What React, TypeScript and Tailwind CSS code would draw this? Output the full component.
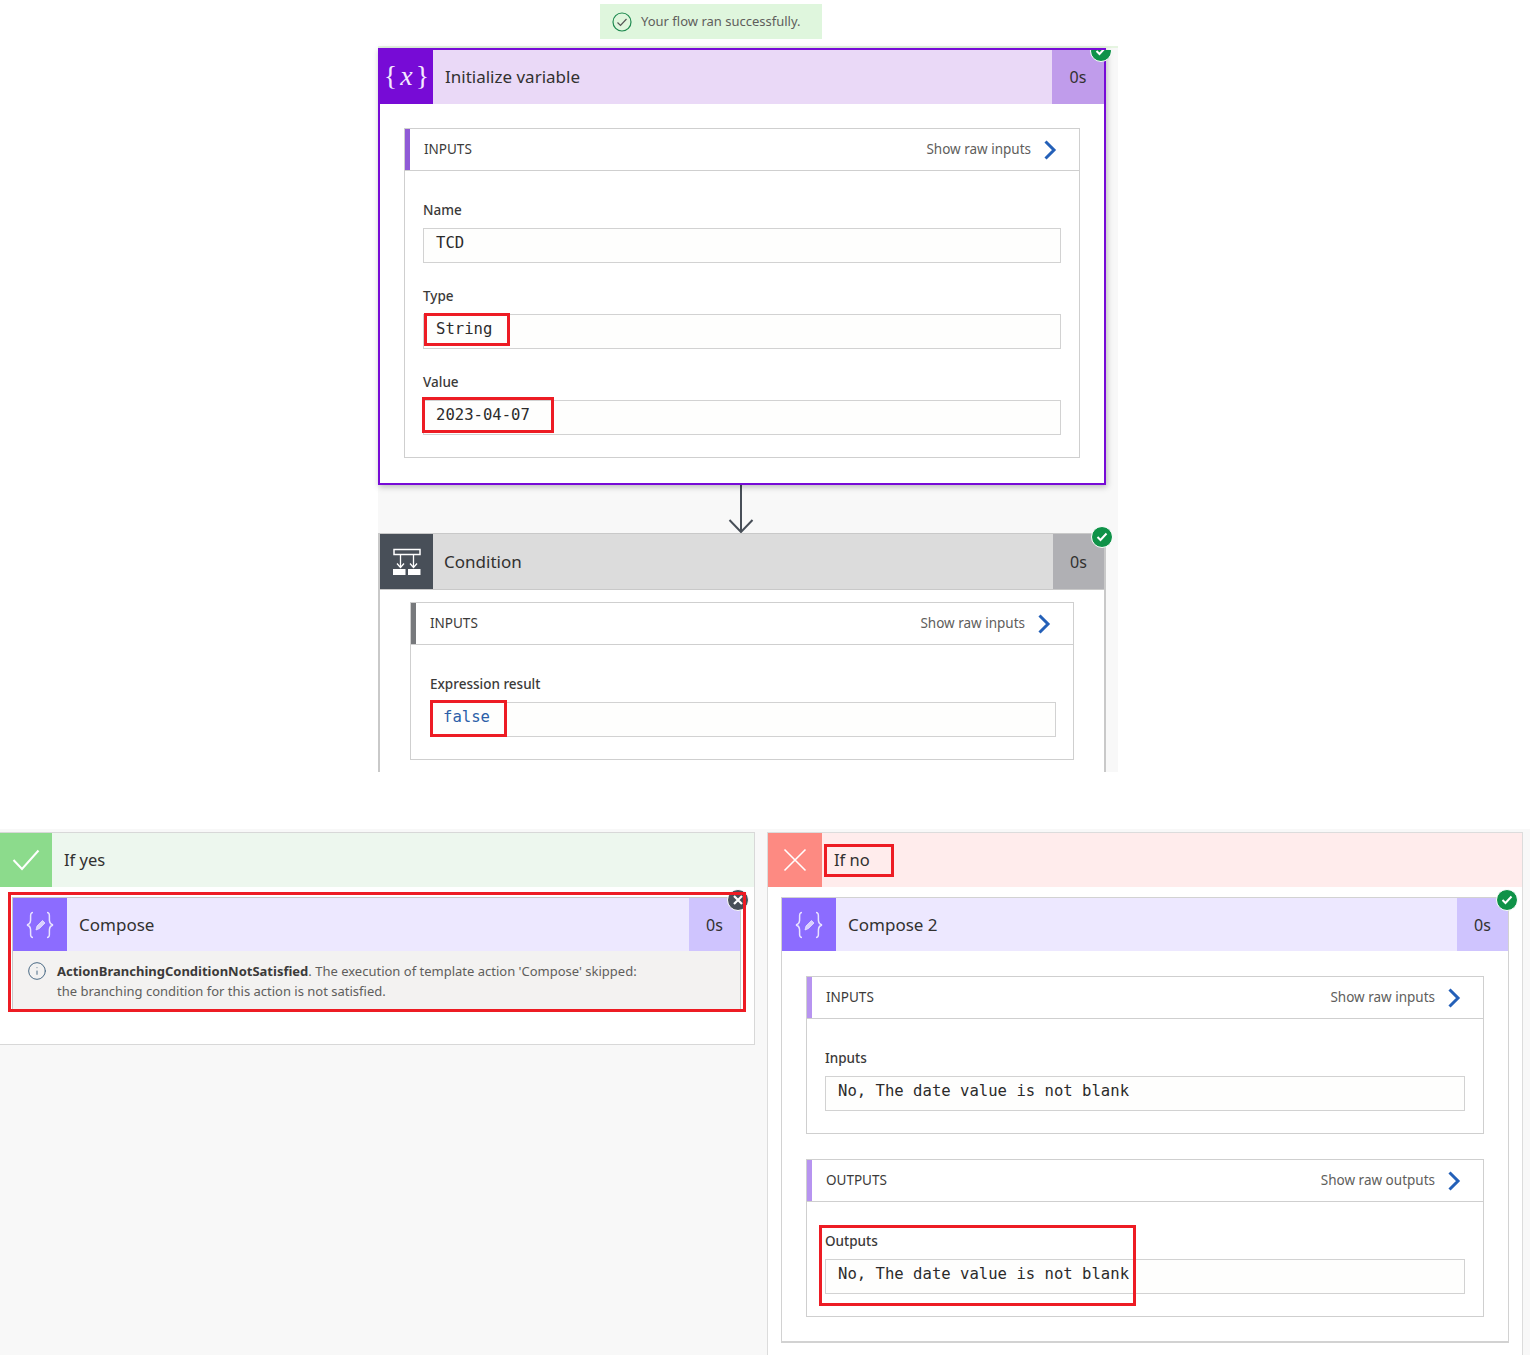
import React from 'react';
import { Info } from 'lucide-react';

const UI_FONT = "font-['Noto_Sans',sans-serif]";
const MONO_FONT = "font-['DejaVu_Sans_Mono',monospace]";

const RedBox: React.FC<{ className: string }> = ({ className }) => (
  <div className={`absolute border-[3px] border-[#ed1c24] pointer-events-none ${className}`} />
);

const Chevron = () => (
  <svg width="14" height="20" viewBox="0 0 14 20" fill="none">
    <path d="M2.5 1.5 L11 10 L2.5 18.5" stroke="#2460b8" strokeWidth="3" />
  </svg>
);

const CheckBadge = () => (
  <div className="w-[22px] h-[22px] rounded-full bg-[#0f9248] border border-white flex items-center justify-center">
    <svg width="12" height="10" viewBox="0 0 12 10" fill="none">
      <path d="M1.5 5 L4.5 8 L10.5 1.5" stroke="white" strokeWidth="2" />
    </svg>
  </div>
);

const CrossBadge = () => (
  <div className="w-[22px] h-[22px] rounded-full bg-[#484f58] border border-white flex items-center justify-center">
    <svg width="10" height="10" viewBox="0 0 10 10" fill="none">
      <path d="M1 1 L9 9 M9 1 L1 9" stroke="white" strokeWidth="2.2" />
    </svg>
  </div>
);

const ComposeIcon = () => (
  <svg width="30" height="30" viewBox="0 0 30 30" fill="none">
    <path d="M8 2.5 C4.5 2.5 6 7 5.5 11 C5.2 13.5 4 14.5 2 15 C4 15.5 5.2 16.5 5.5 19 C6 23 4.5 27.5 8 27.5" stroke="#e9e3ff" strokeWidth="1.5" />
    <path d="M22 2.5 C25.5 2.5 24 7 24.5 11 C24.8 13.5 26 14.5 28 15 C26 15.5 24.8 16.5 24.5 19 C24 23 25.5 27.5 22 27.5" stroke="#e9e3ff" strokeWidth="1.5" />
    <path d="M11 20 L12 16 L17.5 10.5 L20 13 L14.5 18.5 Z" fill="#d9cfff" stroke="#e9e3ff" strokeWidth="0.8" />
  </svg>
);

const ConditionIcon = () => (
  <svg width="30" height="28" viewBox="0 0 30 28" fill="none">
    <rect x="2" y="1.5" width="26" height="5" stroke="white" strokeWidth="1.5" />
    <path d="M8.5 7 V19 M21.5 7 V19" stroke="white" strokeWidth="1.3" />
    <path d="M5 15.5 L8.5 19.5 L12 15.5 M18 15.5 L21.5 19.5 L25 15.5" stroke="white" strokeWidth="1.3" />
    <rect x="1" y="21" width="12.5" height="6" fill="white" />
    <rect x="16" y="21" width="12.5" height="6" fill="white" />
  </svg>
);

const Field: React.FC<{
  label: string;
  value: string;
  valueClass?: string;
  className?: string;
  mark?: string;
}> = ({ label, value, valueClass = 'text-[#2b2b2b]', className = '', mark }) => (
  <div className={className}>
    <div className="h-[20px] leading-[20px] text-[13.5px] font-medium text-[#3b3a39]">{label}</div>
    <div className="relative h-[35px] border border-[#d2d2d2] bg-[#fefefd] pl-[12px] pt-[1px] mt-[8px]">
      <span className={`${MONO_FONT} text-[15.6px] leading-[20px] whitespace-pre ${valueClass}`}>{value}</span>
      {mark && <RedBox className={mark} />}
    </div>
  </div>
);

const Section: React.FC<{
  title: string;
  raw: string;
  bar: string;
  className: string;
  children: React.ReactNode;
}> = ({ title, raw, bar, className, children }) => (
  <div className={`border border-[#cfcfcf] bg-white ${className}`}>
    <div className="h-[42px] flex items-center border-b border-[#cfcfcf]">
      <div className={`w-[5px] self-stretch ${bar}`} />
      <span className="ml-[14px] text-[13.5px] text-[#3b3a39]">{title}</span>
      <span className="ml-auto text-[13.5px] text-[#605e5c]">{raw}</span>
      <span className="ml-[12px] mr-[22px] flex"><Chevron /></span>
    </div>
    {children}
  </div>
);

const ComposeHeader: React.FC<{ title: string }> = ({ title }) => (
  <div className="h-[53px] flex bg-[#ede8ff]">
    <div className="w-[54px] bg-[#8c6cff] flex items-center justify-center"><ComposeIcon /></div>
    <span className="ml-[12px] self-center text-[17px] text-[#323130]">{title}</span>
    <div className="ml-auto w-[51px] bg-[#cfc4fe] flex items-center justify-center text-[16px] text-[#323130]">0s</div>
  </div>
);

export default function App() {
  return (
    <div className={`w-[1536px] h-[1363px] bg-white overflow-hidden ${UI_FONT}`}>
      {/* Run banner */}
      <div className="ml-[600px] mt-[4px] w-[222px] h-[35px] bg-[#dff6dd] flex items-center pl-[12px]">
        <svg width="20" height="20" viewBox="0 0 20 20" fill="none">
          <circle cx="10" cy="10" r="9" stroke="#1f8a50" strokeWidth="1.2" />
          <path d="M5.5 10.5 L8.5 13.5 L14.5 7" stroke="#555" strokeWidth="1.2" />
        </svg>
        <span className="ml-[9px] text-[13px] text-[#605e5c] whitespace-nowrap">Your flow ran successfully.</span>
      </div>

      {/* Top flow */}
      <div className="ml-[378px] mt-[7px] w-[740px] h-[726px] bg-[#f8f8f8] border-t-2 border-[#e6f5e1] flex flex-col">
        <div className="relative w-[728px] h-[437px] shrink-0 border-2 border-[#770bd6] bg-white shadow-[1px_2px_6px_rgba(0,0,0,0.25)]">
          <div className="h-[54px] flex bg-[#ead9f7]">
            <div className="w-[53px] bg-[#770bd6] flex items-center justify-center text-[#f4e9ff] font-['Liberation_Serif',serif] text-[28px] leading-none pb-[3px]">
              <span>{'{'}</span><span className="italic mx-[3px]">x</span><span>{'}'}</span>
            </div>
            <span className="ml-[12px] self-center text-[17px] text-[#323130]">Initialize variable</span>
            <div className="ml-auto w-[52px] bg-[#c09ceb] flex items-center justify-center text-[16px] text-[#323130]">0s</div>
          </div>
          <div className="absolute top-0 -right-[8px] w-[22px] h-[12px] overflow-hidden">
            <div className="-mt-[10px]"><CheckBadge /></div>
          </div>
          <Section title="INPUTS" raw="Show raw inputs" bar="bg-[#8f5ad6]" className="mt-[24px] ml-[24px] w-[676px]">
            <div className="pt-[29px] pb-[22px] px-[18px]">
              <Field label="Name" value="TCD" />
              <Field label="Type" value="String" className="mt-[23px]" mark="left-0 -top-[2px] w-[86px] h-[33px]" />
              <Field label="Value" value="2023-04-07" className="mt-[23px]" mark="-left-[2px] -top-[4px] w-[132px] h-[36px]" />
            </div>
          </Section>
        </div>

        <div className="h-[48px] shrink-0 ml-[350px]">
          <svg width="26" height="48" viewBox="0 0 26 48" fill="none">
            <path d="M13 0 V47 M1.5 35 L13 47 L24.5 35" stroke="#484f58" strokeWidth="2" />
          </svg>
        </div>

        <div className="relative w-[728px] flex-1 border-x-2 border-t border-[#c9c9c9] bg-white">
          <div className="h-[56px] flex bg-[#dcdcdc] border-b border-[#c9c9c9]">
            <div className="w-[53px] bg-[#484f58] flex items-center justify-center"><ConditionIcon /></div>
            <span className="ml-[11px] self-center text-[17px] text-[#323130]">Condition</span>
            <div className="ml-auto w-[51px] bg-[#b0b0b4] flex items-center justify-center text-[16px] text-[#323130]">0s</div>
          </div>
          <div className="absolute -top-[8px] -right-[9px]"><CheckBadge /></div>
          <Section title="INPUTS" raw="Show raw inputs" bar="bg-[#77797c]" className="mt-[12px] ml-[30px] w-[664px]">
            <div className="pt-[29px] pb-[22px] pl-[19px] pr-[17px]">
              <Field label="Expression result" value="false" valueClass="text-[#2b5fa8]" mark="-left-px -top-[3px] w-[77px] h-[37px]" />
            </div>
          </Section>
        </div>
      </div>

      {/* Branches */}
      <div className="mt-[57px] w-[1530px] h-[526px] pt-[3px] bg-[#f8f8f8] flex items-start">
        <div className="relative w-[755px] h-[213px] bg-white border-t border-r border-b border-[#d8d8d8]">
          <div className="h-[54px] flex bg-[#edf7ee]">
            <div className="w-[52px] bg-[#8cdb8c] flex items-center justify-center">
              <svg width="28" height="22" viewBox="0 0 28 22" fill="none">
                <path d="M1.5 11 L10 20 L26.5 1.5" stroke="white" strokeWidth="2" />
              </svg>
            </div>
            <span className="ml-[12px] self-center text-[16.5px] text-[#323130]">If yes</span>
          </div>
          <div className="relative mt-[10px] ml-[12px] w-[729px] border border-[#c8c8c8] border-b-[#d8d8d8]">
            <ComposeHeader title="Compose" />
            <div className="h-[58px] bg-[#f3f2f1] flex pt-[10px] pl-[14px]">
              <Info className="w-[20px] h-[20px] text-[#4a6a85] shrink-0" strokeWidth={1.2} />
              <p className="ml-[10px] text-[13px] leading-[20px] text-[#605e5c]">
                <span className="font-bold text-[#3b3a39]">ActionBranchingConditionNotSatisfied</span>. The execution of template action 'Compose' skipped:<br />
                the branching condition for this action is not satisfied.
              </p>
            </div>
            <div className="absolute -top-[9px] -right-[9px]"><CrossBadge /></div>
          </div>
          <RedBox className="left-[8px] top-[59px] w-[738px] h-[120px]" />
        </div>

        <div className="ml-[12px] w-[756px] h-[523px] bg-white border-t border-x border-[#dcdcdc]">
          <div className="relative h-[54px] flex bg-[#ffecec]">
            <div className="w-[54px] bg-[#fd8a82] flex items-center justify-center">
              <svg width="24" height="24" viewBox="0 0 24 24" fill="none">
                <path d="M1.5 1.5 L22.5 22.5 M22.5 1.5 L1.5 22.5" stroke="white" strokeWidth="1.6" />
              </svg>
            </div>
            <span className="ml-[12px] self-center text-[16.5px] text-[#323130]">If no</span>
            <RedBox className="left-[56px] top-[11px] w-[70px] h-[33px]" />
          </div>
          <div className="relative mt-[10px] ml-[13px] w-[728px] h-[446px] border border-[#d2d2d2] border-b-2">
            <ComposeHeader title="Compose 2" />
            <div className="absolute -top-[9px] -right-[10px]"><CheckBadge /></div>
            <Section title="INPUTS" raw="Show raw inputs" bar="bg-[#b794f0]" className="mt-[25px] ml-[24px] w-[678px]">
              <div className="pt-[29px] pb-[22px] pl-[18px] pr-[18px]">
                <Field label="Inputs" value="No, The date value is not blank" />
              </div>
            </Section>
            <Section title="OUTPUTS" raw="Show raw outputs" bar="bg-[#b794f0]" className="mt-[25px] ml-[24px] w-[678px]">
              <div className="pt-[29px] pb-[22px] pl-[18px] pr-[18px]">
                <Field label="Outputs" value="No, The date value is not blank" mark="-left-[7px] -top-[35px] w-[317px] h-[81px]" />
              </div>
            </Section>
          </div>
        </div>
      </div>
    </div>
  );
}
